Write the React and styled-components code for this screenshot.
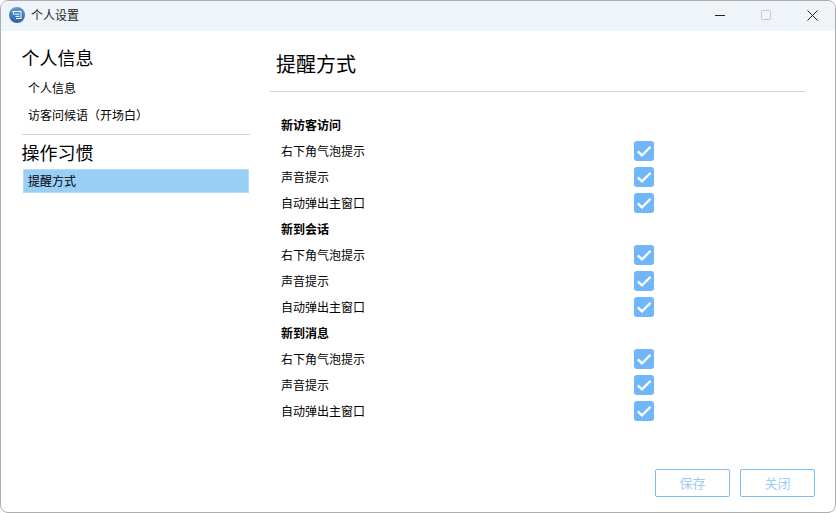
import React from "react";
import styled, { createGlobalStyle } from "styled-components";

const Global = createGlobalStyle`
  html, body { margin: 0; padding: 0; background: #fff; }
  body { font-family: "Noto Sans CJK SC", "Liberation Sans", sans-serif; }
`;

const Win = styled.div`
  width: 836px; height: 513px; box-sizing: border-box;
  border: 1px solid #adadad; border-radius: 8px;
  background: #fff; overflow: hidden; display: flex; flex-direction: column;
`;
const TitleBar = styled.div`
  height: 30px; box-sizing: border-box; flex: none; background: #eff4f9; display: flex; align-items: center;
  padding: 0 0 2px 8px;
`;
const AppIcon = styled.svg`width: 16px; height: 16px; flex: none;`;
const WinTitle = styled.div`
  margin-left: 6px; font-size: 12px; line-height: 16px; color: #222; flex: 1;
`;
const Ctl = styled.div`
  width: 46px; height: 28px; display: flex; align-items: center; justify-content: center;
`;
const Body = styled.div`flex: 1; display: flex; min-height: 0;`;
const Side = styled.div`
  width: 228px; margin-left: 21px; padding-top: 12px; flex: none;
`;
const Heading = styled.div`
  font-size: 18px; line-height: 28px; color: #000; height: 28px; margin-left: -0.5px;
`;
const SideItem = styled.div`
  font-size: 12px; line-height: 24px; height: 24px; padding-left: 5px; margin: 0 1px;
  color: #000;
  background: ${p => (p.$active ? "#99cef7" : "transparent")};
  outline: ${p => (p.$active ? "1px solid #b5dcfa" : "none")};
  outline-offset: -1px;
  ${Heading} + & { margin-top: ${p => (p.$active ? 3 : 5)}px; }
  & + & { margin-top: 3px; }
`;
const SideRule = styled.div`height: 1px; background: #d2d2d2; margin: 7px 0 3px;`;
const Main = styled.div`
  margin-left: 20px; flex: 1; display: flex; flex-direction: column;
`;
const MainTitle = styled.div`
  height: 61px; box-sizing: border-box; border-bottom: 1px solid #d4d4d4; margin-right: 30px;
  font-size: 20px; line-height: 28px; padding: 19px 0 0 6px; color: #000;
`;
const Form = styled.div`padding: 20px 0 0 11px; flex: 1;`;
const Row = styled.div`
  height: 26px; display: flex; align-items: center; font-size: 12px; color: #000;
`;
const GroupRow = styled(Row)`font-weight: 700;`;
const Label = styled.div`width: 353px; flex: none; padding-bottom: 2px;`;
const Check = styled.svg`width: 20px; height: 20px; flex: none; display: block;`;
const Footer = styled.div`
  display: flex; justify-content: flex-end; gap: 10px; padding: 0 20px 15px 0;
`;
const Btn = styled.button`
  width: 75px; height: 28px; box-sizing: border-box; border: 1px solid #7dbcf7;
  border-radius: 2px; background: #fff; color: #9ccbf8; font-size: 13px; padding: 0;
  font-family: inherit; line-height: 26px;
`;

const CheckBox = () => (
  <Check viewBox="0 0 20 20">
    <rect width="20" height="20" rx="3" fill="#71b6fb" />
    <path d="M3.8 10.3 L8 14.3 L16.6 5.8" fill="none" stroke="#fff" strokeWidth="2.3" />
  </Check>
);

const items = ["右下角气泡提示", "声音提示", "自动弹出主窗口"];
const groups = ["新访客访问", "新到会话", "新到消息"];

export default function App() {
  return (
    <>
      <Global />
      <Win>
        <TitleBar>
          <AppIcon viewBox="0 0 16 16">
            <defs>
              <linearGradient id="g" x1="0" y1="0" x2="0" y2="1">
                <stop offset="0" stopColor="#5e9bd6" />
                <stop offset="1" stopColor="#2a62a6" />
              </linearGradient>
            </defs>
            <circle cx="8" cy="8" r="8" fill="url(#g)" />
            <path d="M3.5 4.5h8.5v7.5M12 11.5H7M5.5 7.2h5M6.5 9.4h4M4.5 4.5v3" fill="none" stroke="#fff" strokeWidth="1" />
          </AppIcon>
          <WinTitle>个人设置</WinTitle>
          <Ctl>
            <svg width="10" height="10" viewBox="0 0 10 10"><path d="M0 5.5H10" stroke="#222" strokeWidth="1" /></svg>
          </Ctl>
          <Ctl>
            <svg width="10" height="10" viewBox="0 0 10 10"><rect x=".5" y=".5" width="9" height="9" rx="1" fill="none" stroke="#c4c8cc" /></svg>
          </Ctl>
          <Ctl>
            <svg width="11" height="11" viewBox="0 0 11 11"><path d="M.5.5l10 10M10.5.5l-10 10" stroke="#222" strokeWidth="1" /></svg>
          </Ctl>
        </TitleBar>
        <Body>
          <Side>
            <Heading>个人信息</Heading>
            <SideItem>个人信息</SideItem>
            <SideItem>访客问候语（开场白）</SideItem>
            <SideRule />
            <Heading>操作习惯</Heading>
            <SideItem $active>提醒方式</SideItem>
          </Side>
          <Main>
            <MainTitle>提醒方式</MainTitle>
            <Form>
              {groups.map(g => (
                <React.Fragment key={g}>
                  <GroupRow><Label>{g}</Label></GroupRow>
                  {items.map(i => (
                    <Row key={i}><Label>{i}</Label><CheckBox /></Row>
                  ))}
                </React.Fragment>
              ))}
            </Form>
            <Footer>
              <Btn>保存</Btn>
              <Btn>关闭</Btn>
            </Footer>
          </Main>
        </Body>
      </Win>
    </>
  );
}
